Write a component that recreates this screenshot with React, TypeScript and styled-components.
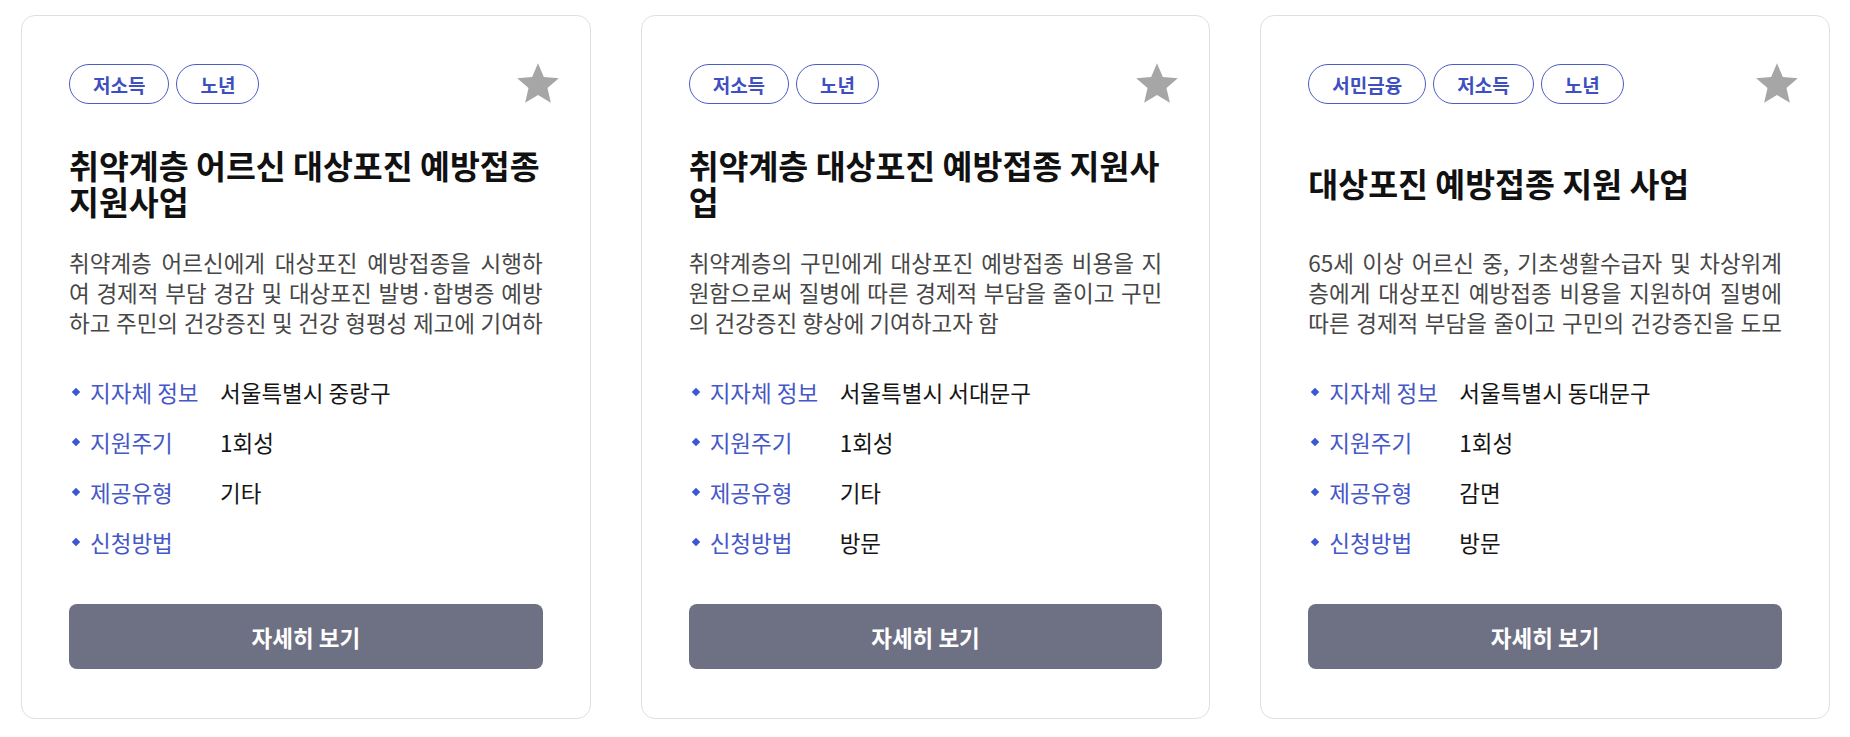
import React from "react";
import styled, { createGlobalStyle } from "styled-components";

const GlobalStyle = createGlobalStyle`
  html, body {
    margin: 0;
    padding: 0;
    background: #ffffff;
  }
  body {
    font-family: "Noto Sans CJK KR", "Noto Sans", sans-serif;
    color: #222;
  }
`;

type InfoRow = { label: string; value: string };

type Program = {
  tags: string[];
  title: string;
  desc: string;
  info: InfoRow[];
};

const programs: Program[] = [
  {
    tags: ["저소득", "노년"],
    title: "취약계층 어르신 대상포진 예방접종 지원사업",
    desc:
      "취약계층 어르신에게 대상포진 예방접종을 시행하여 경제적 부담 경감 및 대상포진 발병·합병증 예방하고 주민의 건강증진 및 건강 형평성 제고에 기여하고자 함",
    info: [
      { label: "지자체 정보", value: "서울특별시 중랑구" },
      { label: "지원주기", value: "1회성" },
      { label: "제공유형", value: "기타" },
      { label: "신청방법", value: "" },
    ],
  },
  {
    tags: ["저소득", "노년"],
    title: "취약계층 대상포진 예방접종 지원사업",
    desc:
      "취약계층의 구민에게 대상포진 예방접종 비용을 지원함으로써 질병에 따른 경제적 부담을 줄이고 구민의 건강증진 향상에 기여하고자 함",
    info: [
      { label: "지자체 정보", value: "서울특별시 서대문구" },
      { label: "지원주기", value: "1회성" },
      { label: "제공유형", value: "기타" },
      { label: "신청방법", value: "방문" },
    ],
  },
  {
    tags: ["서민금융", "저소득", "노년"],
    title: "대상포진 예방접종 지원 사업",
    desc:
      "65세 이상 어르신 중, 기초생활수급자 및 차상위계층에게 대상포진 예방접종 비용을 지원하여 질병에 따른 경제적 부담을 줄이고 구민의 건강증진을 도모하고자 함",
    info: [
      { label: "지자체 정보", value: "서울특별시 동대문구" },
      { label: "지원주기", value: "1회성" },
      { label: "제공유형", value: "감면" },
      { label: "신청방법", value: "방문" },
    ],
  },
];

const Page = styled.main`
  display: grid;
  grid-template-columns: repeat(3, 1fr);
  gap: 50px;
  padding: 15px 20px 19px 21px;
  box-sizing: border-box;
  width: 1850px;
`;

const Card = styled.article`
  display: flex;
  flex-direction: column;
  background: #fff;
  border: 1px solid #dfdfe2;
  border-radius: 14px;
  padding: 48px 47px 49px 47px;
  box-sizing: border-box;
`;

const Header = styled.div`
  display: flex;
  align-items: center;
  justify-content: space-between;
  min-height: 40px;
`;

const TagList = styled.div`
  display: flex;
  gap: 7px;
`;

const Tag = styled.span`
  display: inline-flex;
  align-items: center;
  height: 40px;
  box-sizing: border-box;
  padding: 0 23px;
  border: 1px solid #4a5cc6;
  border-radius: 20px;
  color: #3e50bf;
  font-size: 19px;
  font-weight: 600;
`;

const StarButton = styled.button`
  border: 0;
  background: none;
  padding: 0;
  margin: -6px -20px -6px 0;
  width: 50px;
  height: 50px;
  cursor: pointer;
  svg {
    display: block;
    filter: blur(0.5px);
  }
`;

const Title = styled.h2`
  display: flex;
  align-items: center;
  height: 72px;
  margin: 43px 0 0;
  font-size: 32.5px;
  line-height: 36px;
  font-weight: 700;
  color: #111;
`;

/* clamped to three lines, no ellipsis, like the source page */
const Desc = styled.p`
  margin: 28px 0 0;
  font-size: 22.5px;
  line-height: 30px;
  max-height: 90px;
  overflow: hidden;
  text-align: justify;
  color: #474747;
`;

const InfoList = styled.dl`
  display: flex;
  flex-direction: column;
  gap: 20px;
  margin: 40px 0 0;
`;

const InfoItem = styled.div`
  display: grid;
  grid-template-columns: 151px 1fr;
  font-size: 22.5px;
  line-height: 30px;
`;

const Label = styled.dt`
  display: flex;
  align-items: center;
  color: #4658c8;
  &::before {
    content: "";
    width: 6px;
    height: 6px;
    margin: 0 11px 0 4px;
    background: #3b57d3;
    transform: rotate(45deg);
  }
`;

const Value = styled.dd`
  margin: 0;
  color: #161616;
`;

const DetailButton = styled.button`
  margin-top: 47px;
  height: 65px;
  border: 0;
  border-radius: 8px;
  background: #6e7083;
  color: #fff;
  font-family: inherit;
  font-size: 22.5px;
  font-weight: 700;
  cursor: pointer;
`;

function StarIcon() {
  return (
    <svg width="50" height="50" viewBox="0 0 24 24">
      <path
        fill="#a6a6a6"
        d="M12 17.27L18.18 21l-1.64-7.03L22 9.24l-7.19-.61L12 2 9.19 8.63 2 9.24l5.46 4.73L5.82 21z"
      />
    </svg>
  );
}

function ProgramCard({ program }: { program: Program }) {
  return (
    <Card>
      <Header>
        <TagList>
          {program.tags.map((t) => (
            <Tag key={t}>{t}</Tag>
          ))}
        </TagList>
        <StarButton aria-label="즐겨찾기">
          <StarIcon />
        </StarButton>
      </Header>
      <Title>
        <span>{program.title}</span>
      </Title>
      <Desc>{program.desc}</Desc>
      <InfoList>
        {program.info.map((row) => (
          <InfoItem key={row.label}>
            <Label>{row.label}</Label>
            <Value>{row.value}</Value>
          </InfoItem>
        ))}
      </InfoList>
      <DetailButton>자세히 보기</DetailButton>
    </Card>
  );
}

export default function App() {
  return (
    <>
      <GlobalStyle />
      <Page>
        {programs.map((p) => (
          <ProgramCard key={p.title} program={p} />
        ))}
      </Page>
    </>
  );
}
